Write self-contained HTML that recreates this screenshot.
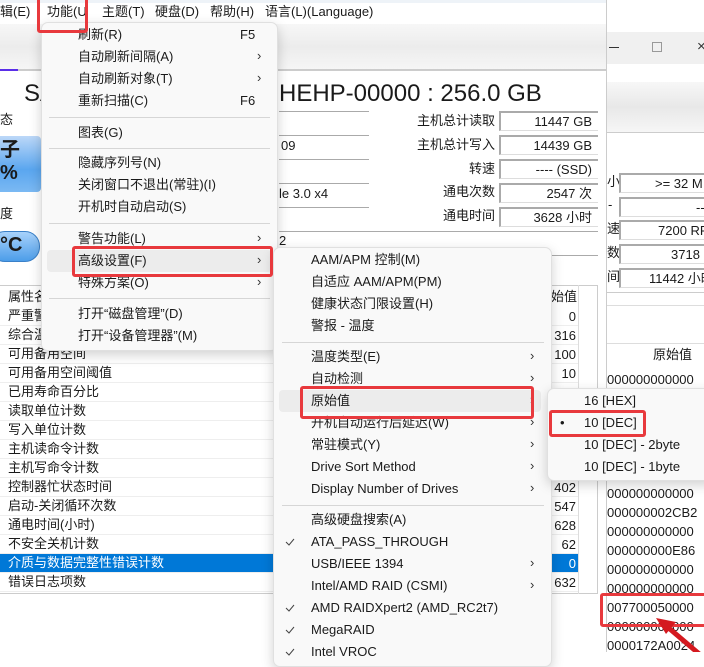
<!DOCTYPE html>
<html><head><meta charset="utf-8"><style>
*{margin:0;padding:0;box-sizing:border-box}
body{width:704px;height:652px;overflow:hidden;position:relative;background:#fff;font-family:"Liberation Sans","Noto Sans CJK SC",sans-serif;font-size:13px;color:#1a1a1a}
.a{position:absolute;white-space:nowrap}
.t{position:absolute;white-space:nowrap;line-height:18px}
.menu{position:absolute;background:#f9f9f9;border:1px solid #e0e0e0;border-radius:7px;box-shadow:0 4px 12px rgba(0,0,0,.18)}
.sep{position:absolute;height:1px;background:#d6d6d6}
.arr{position:absolute;font-size:13px;color:#333}
.red{position:absolute;border:3px solid #e8393d;border-radius:3px}
.row{position:absolute;left:0;height:19px;border-bottom:1px solid #eee;line-height:18px;padding-left:8px}
.box{position:absolute;border-top:2px solid #aaa;border-left:2px solid #aaa;border-bottom:1px solid #ddd;height:20px;text-align:right;padding-right:6px;line-height:18px;white-space:nowrap;overflow:hidden}
.rb{position:absolute;border-top:2px solid #aaa;border-left:2px solid #aaa;border-bottom:1px solid #ddd;height:20px;line-height:18px;white-space:nowrap;overflow:hidden;width:90px}
</style></head><body>
<!-- menu bar -->
<div class="a" style="left:0;top:0;width:607px;height:3px;background:#eef3f8"></div>
<div class="a" style="left:0;top:3px;width:607px;height:21px;background:#fff"></div>
<div class="t" style="left:0;top:3px">辑(E)</div>
<div class="t" style="left:47px;top:3px">功能(U</div>
<div class="t" style="left:102px;top:3px">主题(T)</div>
<div class="t" style="left:155px;top:3px">硬盘(D)</div>
<div class="t" style="left:210px;top:3px">帮助(H)</div>
<div class="t" style="left:265px;top:3px">语言(L)(Language)</div>
<!-- toolbar gradient main -->
<div class="a" style="left:0;top:24px;width:607px;height:46px;background:linear-gradient(#f7f7f7,#ececec 50%,#f6f6f6)"></div>
<div class="a" style="left:0;top:69px;width:607px;height:2px;background:#ccc"></div>
<div class="a" style="left:0;top:69px;width:18px;height:2px;background:#5a2ee8"></div>
<div class="a" style="left:606px;top:0;width:1px;height:652px;background:#ccc"></div>
<!-- right window -->
<div class="a" style="left:607px;top:0;width:97px;height:32px;background:#fff"></div>
<div class="a" style="left:607px;top:32px;width:97px;height:32px;background:#f0f0f0"></div>
<div class="a" style="left:609px;top:47px;width:10px;height:1px;background:#333"></div>
<div class="a" style="left:652px;top:42px;width:10px;height:10px;border:1px solid #999"></div>
<div class="t" style="left:697px;top:38px;font-size:15px;color:#333">×</div>
<div class="a" style="left:607px;top:82px;width:97px;height:50px;background:linear-gradient(#f7f7f7,#e8e8e8 50%,#f6f6f6)"></div>
<div class="a" style="left:607px;top:132px;width:97px;height:1px;background:#ccc"></div>
<div class="t" style="left:607px;top:173px">小</div>
<div class="t" style="left:608px;top:196px">-</div>
<div class="t" style="left:607px;top:220px">速</div>
<div class="t" style="left:607px;top:244px">数</div>
<div class="t" style="left:607px;top:268px">间</div>
<div class="a" style="left:607px;top:170px;width:12px;height:120px;background:#fff"></div>
<div class="t" style="left:600px;top:173px;width:19px;overflow:hidden;text-indent:7px">小</div>
<div class="t" style="left:608px;top:196px">-</div>
<div class="t" style="left:600px;top:220px;width:19px;overflow:hidden;text-indent:7px">速</div>
<div class="t" style="left:600px;top:244px;width:19px;overflow:hidden;text-indent:7px">数</div>
<div class="t" style="left:600px;top:268px;width:19px;overflow:hidden;text-indent:7px">间</div>
<div class="rb" style="left:619px;top:173px;padding-left:34px">&gt;= 32 M</div>
<div class="rb" style="left:619px;top:197px;padding-left:75px">--</div>
<div class="rb" style="left:619px;top:220px;padding-left:37px">7200 RP</div>
<div class="rb" style="left:619px;top:244px;padding-left:50px">3718 次</div>
<div class="rb" style="left:619px;top:268px;padding-left:28px">11442 小时</div>
<div class="a" style="left:607px;top:292px;width:97px;height:1px;background:#ccc"></div>
<div class="a" style="left:607px;top:305px;width:97px;height:1px;background:#ddd"></div>
<div class="a" style="left:607px;top:343px;width:97px;height:309px;background:#fff;border-top:1px solid #ddd"></div>
<div class="t" style="left:653px;top:346px">原始值</div>
<div style="position:absolute;left:607px;top:370px;font-size:13px;line-height:19px">
<div>000000000000</div><div>&nbsp;</div><div>&nbsp;</div><div>&nbsp;</div><div>&nbsp;</div><div>&nbsp;</div>
<div>000000000000</div><div>000000002CB2</div><div>000000000000</div><div>000000000E86</div><div>000000000000</div><div>000000000000</div><div>007700050000</div><div>000000000000</div><div>0000172A0024</div>
</div>
<!-- main content -->
<div class="t" style="left:24px;top:80px;font-size:24px;line-height:28px">SA</div>
<div class="t" style="left:279px;top:80px;font-size:24px;line-height:28px">HEHP-00000 : 256.0 GB</div>
<div class="t" style="left:0;top:111px">态</div>
<div class="a" style="left:0;top:136px;width:41px;height:56px;background:linear-gradient(#bcd8f8,#5aa6ef 60%,#7bb9f3);border-radius:0 4px 4px 0"></div>
<div class="t" style="left:0;top:141px;font-size:20px;font-weight:bold">子</div>
<div class="t" style="left:0;top:164px;font-size:20px;font-weight:bold">%</div>
<div class="t" style="left:0;top:205px">度</div>
<div class="a" style="left:-10px;top:231px;width:50px;height:31px;background:linear-gradient(#a8d2fb,#4c9de9);border-radius:15px;border:1px solid #3a80c8"></div>
<div class="t" style="left:0;top:236px;font-size:20px;font-weight:bold">°C</div>
<div class="a" style="left:279px;top:111px;width:90px;height:1px;background:#aaa"></div>
<div class="a" style="left:279px;top:135px;width:90px;height:1px;background:#aaa"></div>
<div class="a" style="left:279px;top:159px;width:90px;height:1px;background:#aaa"></div>
<div class="a" style="left:279px;top:183px;width:90px;height:1px;background:#aaa"></div>
<div class="a" style="left:279px;top:207px;width:90px;height:1px;background:#aaa"></div>
<div class="t" style="left:281px;top:137px">09</div>
<div class="t" style="left:279px;top:185px">le 3.0 x4</div>
<div class="t" style="left:279px;top:232px">2</div>
<div class="a" style="left:279px;top:231px;width:319px;height:1px;background:#aaa"></div>
<div class="a" style="left:550px;top:255px;width:48px;height:1px;background:#aaa"></div>
<div class="t" style="left:417px;top:112px">主机总计读取</div>
<div class="t" style="left:417px;top:136px">主机总计写入</div>
<div class="t" style="left:469px;top:160px">转速</div>
<div class="t" style="left:443px;top:183px">通电次数</div>
<div class="t" style="left:443px;top:207px">通电时间</div>
<div class="box" style="left:499px;top:111px;width:99px">11447 GB</div>
<div class="box" style="left:499px;top:135px;width:99px">14439 GB</div>
<div class="box" style="left:499px;top:159px;width:99px">---- (SSD)</div>
<div class="box" style="left:499px;top:183px;width:99px">2547 次</div>
<div class="box" style="left:499px;top:207px;width:99px">3628 小时</div>
<!-- table -->
<div class="a" style="left:0;top:285px;width:598px;height:309px;border:1px solid #ccc;border-left:none"></div>
<div class="a" style="left:578px;top:285px;width:1px;height:309px;background:#ddd"></div>
<div class="t" style="left:8px;top:288px">属性名</div>
<div class="t" style="left:551px;top:288px">始值</div>
<div style="position:absolute;left:0;top:307px;width:578px">
<div class="row" style="top:0;width:578px">严重警</div>
<div class="row" style="top:19px;width:578px">综合温</div>
<div class="row" style="top:38px;width:578px">可用备用空间</div>
<div class="row" style="top:57px;width:578px">可用备用空间阈值</div>
<div class="row" style="top:76px;width:578px">已用寿命百分比</div>
<div class="row" style="top:95px;width:578px">读取单位计数</div>
<div class="row" style="top:114px;width:578px">写入单位计数</div>
<div class="row" style="top:133px;width:578px">主机读命令计数</div>
<div class="row" style="top:152px;width:578px">主机写命令计数</div>
<div class="row" style="top:171px;width:578px">控制器忙状态时间</div>
<div class="row" style="top:190px;width:578px">启动-关闭循环次数</div>
<div class="row" style="top:209px;width:578px">通电时间(小时)</div>
<div class="row" style="top:228px;width:578px">不安全关机计数</div>
<div class="row" style="top:247px;width:578px;background:#0078d7;color:#fff">介质与数据完整性错误计数</div>
<div class="row" style="top:266px;width:578px">错误日志项数</div>
</div>
<div style="position:absolute;left:548px;top:307px;width:28px;text-align:right;line-height:19px">
<div>0</div><div>316</div><div>100</div><div>10</div><div>&nbsp;</div><div>&nbsp;</div><div>&nbsp;</div><div>&nbsp;</div><div>&nbsp;</div><div>402</div><div>547</div><div>628</div><div>62</div><div style="color:#fff">0</div><div>632</div>
</div>
<!-- Menu 1 -->
<div class="menu" style="left:41px;top:22px;width:237px;height:329px"></div>
<div class="a" style="left:47px;top:250px;width:225px;height:22px;background:#ececec;border-radius:4px"></div>
<div class="t" style="left:78px;top:26px">刷新(R)</div><div class="t" style="left:240px;top:26px">F5</div>
<div class="t" style="left:78px;top:48px">自动刷新间隔(A)</div><div class="arr" style="left:257px;top:48px">›</div>
<div class="t" style="left:78px;top:70px">自动刷新对象(T)</div><div class="arr" style="left:257px;top:70px">›</div>
<div class="t" style="left:78px;top:92px">重新扫描(C)</div><div class="t" style="left:240px;top:92px">F6</div>
<div class="sep" style="left:49px;top:117px;width:221px"></div>
<div class="t" style="left:78px;top:124px">图表(G)</div>
<div class="sep" style="left:49px;top:148px;width:221px"></div>
<div class="t" style="left:78px;top:154px">隐藏序列号(N)</div>
<div class="t" style="left:78px;top:176px">关闭窗口不退出(常驻)(I)</div>
<div class="t" style="left:78px;top:198px">开机时自动启动(S)</div>
<div class="sep" style="left:49px;top:223px;width:221px"></div>
<div class="t" style="left:78px;top:230px">警告功能(L)</div><div class="arr" style="left:257px;top:230px">›</div>
<div class="t" style="left:78px;top:252px">高级设置(F)</div><div class="arr" style="left:257px;top:252px">›</div>
<div class="t" style="left:78px;top:274px">特殊方案(O)</div><div class="arr" style="left:257px;top:274px">›</div>
<div class="sep" style="left:49px;top:298px;width:221px"></div>
<div class="t" style="left:78px;top:305px">打开“磁盘管理”(D)</div>
<div class="t" style="left:78px;top:327px">打开“设备管理器”(M)</div>
<!-- Menu 2 -->
<div class="menu" style="left:273px;top:247px;width:279px;height:420px"></div>
<div class="a" style="left:279px;top:390px;width:262px;height:22px;background:#ececec;border-radius:4px"></div>
<div class="t" style="left:311px;top:251px">AAM/APM 控制(M)</div>
<div class="t" style="left:311px;top:273px">自适应 AAM/APM(PM)</div>
<div class="t" style="left:311px;top:295px">健康状态门限设置(H)</div>
<div class="t" style="left:311px;top:317px">警报 - 温度</div>
<div class="sep" style="left:282px;top:342px;width:262px"></div>
<div class="t" style="left:311px;top:348px">温度类型(E)</div><div class="arr" style="left:530px;top:348px">›</div>
<div class="t" style="left:311px;top:370px">自动检测</div><div class="arr" style="left:530px;top:370px">›</div>
<div class="t" style="left:311px;top:392px">原始值</div><div class="arr" style="left:530px;top:392px">›</div>
<div class="t" style="left:311px;top:414px">开机自动运行后延迟(W)</div><div class="arr" style="left:530px;top:414px">›</div>
<div class="t" style="left:311px;top:436px">常驻模式(Y)</div><div class="arr" style="left:530px;top:436px">›</div>
<div class="t" style="left:311px;top:458px">Drive Sort Method</div><div class="arr" style="left:530px;top:458px">›</div>
<div class="t" style="left:311px;top:480px">Display Number of Drives</div><div class="arr" style="left:530px;top:480px">›</div>
<div class="sep" style="left:282px;top:505px;width:262px"></div>
<div class="t" style="left:311px;top:511px">高级硬盘搜索(A)</div>
<svg class="a" style="left:285px;top:538px" width="10" height="8"><path d="M1 4 L4 7 L9 1" stroke="#444" fill="none" stroke-width="1"/></svg><div class="t" style="left:311px;top:533px">ATA_PASS_THROUGH</div>
<div class="t" style="left:311px;top:555px">USB/IEEE 1394</div><div class="arr" style="left:530px;top:555px">›</div>
<div class="t" style="left:311px;top:577px">Intel/AMD RAID (CSMI)</div><div class="arr" style="left:530px;top:577px">›</div>
<svg class="a" style="left:285px;top:604px" width="10" height="8"><path d="M1 4 L4 7 L9 1" stroke="#444" fill="none" stroke-width="1"/></svg><div class="t" style="left:311px;top:599px">AMD RAIDXpert2 (AMD_RC2t7)</div>
<svg class="a" style="left:285px;top:626px" width="10" height="8"><path d="M1 4 L4 7 L9 1" stroke="#444" fill="none" stroke-width="1"/></svg><div class="t" style="left:311px;top:621px">MegaRAID</div>
<svg class="a" style="left:285px;top:648px" width="10" height="8"><path d="M1 4 L4 7 L9 1" stroke="#444" fill="none" stroke-width="1"/></svg><div class="t" style="left:311px;top:643px">Intel VROC</div>
<!-- Menu 3 -->
<div class="menu" style="left:547px;top:388px;width:170px;height:93px"></div>
<div class="t" style="left:584px;top:392px">16 [HEX]</div>
<div class="t" style="left:560px;top:414px">•</div><div class="t" style="left:584px;top:414px">10 [DEC]</div>
<div class="t" style="left:584px;top:436px">10 [DEC] - 2byte</div>
<div class="t" style="left:584px;top:458px">10 [DEC] - 1byte</div>
<!-- red boxes -->
<div class="red" style="left:37px;top:-4px;width:51px;height:37px"></div>
<div class="red" style="left:72px;top:246px;width:201px;height:31px"></div>
<div class="red" style="left:300px;top:386px;width:234px;height:33px"></div>
<div class="red" style="left:549px;top:410px;width:97px;height:27px"></div>
<div class="red" style="left:600px;top:593px;width:110px;height:34px"></div>
<svg class="a" style="left:640px;top:610px" width="64" height="42"><line x1="24" y1="14" x2="64" y2="48" stroke="#d4191f" stroke-width="5"/><polygon points="16,8 36,12 26,24" fill="#d4191f"/></svg>
</body></html>
